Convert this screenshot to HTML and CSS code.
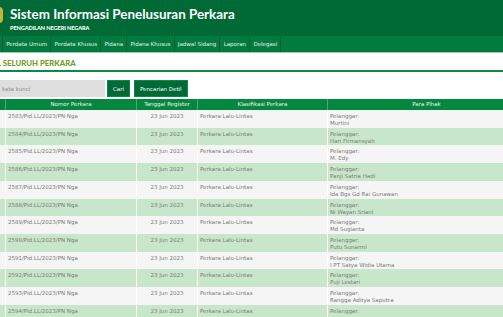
FILE: index.html
```html
<!DOCTYPE html>
<html lang="id">
<head>
<meta charset="utf-8">
<title>Sistem Informasi Penelusuran Perkara</title>
<link rel="stylesheet" href="styles.css">
</head>
<body>
<header class="top">
  <div class="logo"></div>
  <div class="brand">
    <h1 class="brand-title">Sistem Informasi Penelusuran Perkara</h1>
    <div class="brand-sub">PENGADILAN NEGERI NEGARA</div>
  </div>
</header>
<nav class="menu">
  <span class="menu-home" aria-label="Beranda"></span>
  <a class="menu-item">Perdata Umum</a>
  <a class="menu-item">Perdata Khusus</a>
  <a class="menu-item">Pidana</a>
  <a class="menu-item">Pidana Khusus</a>
  <a class="menu-item">Jadwal Sidang</a>
  <a class="menu-item">Laporan</a>
  <a class="menu-item">Delegasi</a>
</nav>
<section class="content">
  <h2 class="page-title">L SELURUH PERKARA</h2>
  <form class="search">
    <input class="search-input" type="text" placeholder="kata kunci">
    <button class="btn" type="button">Cari</button>
    <button class="btn" type="button">Pencarian Detil</button>
  </form>
  <table class="cases">
    <thead>
      <tr><th class="c-no"></th><th class="c-nomor">Nomor Perkara</th><th class="c-tgl">Tanggal Register</th><th class="c-klas">Klasifikasi Perkara</th><th class="c-pihak">Para Pihak</th></tr>
    </thead>
    <tbody>
      <tr><td></td><td>2583/Pid.LL/2023/PN Nga</td><td class="center">23 Jun 2023</td><td>Perkara Lalu-Lintas</td><td>Pelanggar:<br>Murtini</td></tr>
      <tr><td></td><td>2584/Pid.LL/2023/PN Nga</td><td class="center">23 Jun 2023</td><td>Perkara Lalu-Lintas</td><td>Pelanggar:<br>Hari Firmansyah</td></tr>
      <tr><td></td><td>2585/Pid.LL/2023/PN Nga</td><td class="center">23 Jun 2023</td><td>Perkara Lalu-Lintas</td><td>Pelanggar:<br>M. Edy</td></tr>
      <tr><td></td><td>2586/Pid.LL/2023/PN Nga</td><td class="center">23 Jun 2023</td><td>Perkara Lalu-Lintas</td><td>Pelanggar:<br>Panji Satria Hadi</td></tr>
      <tr><td></td><td>2587/Pid.LL/2023/PN Nga</td><td class="center">23 Jun 2023</td><td>Perkara Lalu-Lintas</td><td>Pelanggar:<br>Ida Bgs Gd Rai Gunawan</td></tr>
      <tr><td></td><td>2588/Pid.LL/2023/PN Nga</td><td class="center">23 Jun 2023</td><td>Perkara Lalu-Lintas</td><td>Pelanggar:<br>Ni Wayan Sriani</td></tr>
      <tr><td></td><td>2589/Pid.LL/2023/PN Nga</td><td class="center">23 Jun 2023</td><td>Perkara Lalu-Lintas</td><td>Pelanggar:<br>Md Sugianta</td></tr>
      <tr><td></td><td>2590/Pid.LL/2023/PN Nga</td><td class="center">23 Jun 2023</td><td>Perkara Lalu-Lintas</td><td>Pelanggar:<br>Putu Sunarmi</td></tr>
      <tr><td></td><td>2591/Pid.LL/2023/PN Nga</td><td class="center">23 Jun 2023</td><td>Perkara Lalu-Lintas</td><td>Pelanggar:<br>I PT Satya Widia Utama</td></tr>
      <tr><td></td><td>2592/Pid.LL/2023/PN Nga</td><td class="center">23 Jun 2023</td><td>Perkara Lalu-Lintas</td><td>Pelanggar:<br>Puji Lestari</td></tr>
      <tr><td></td><td>2593/Pid.LL/2023/PN Nga</td><td class="center">23 Jun 2023</td><td>Perkara Lalu-Lintas</td><td>Pelanggar:<br>Rangga Aditya Saputra</td></tr>
      <tr><td></td><td>2594/Pid.LL/2023/PN Nga</td><td class="center">23 Jun 2023</td><td>Perkara Lalu-Lintas</td><td>Pelanggar:</td></tr>
    </tbody>
  </table>
</section>
</body>
</html>
```
FILE: styles.css
```css
html, body {
  margin: 0;
  padding: 0;
  overflow: hidden;
  background: #fff;
}
body {
  font-family: "DejaVu Sans", sans-serif;
  width: 503px;
  height: 317px;
}
.top {
  height: 36px;
  background: #006a36;
  display: flex;
  align-items: flex-start;
}
.logo {
  width: 24px;
  height: 16px;
  margin-left: -21px;
  margin-top: 7px;
  border-radius: 4px;
  background: #c8b23a;
  flex: none;
}
.brand {
  margin-left: 7px;
  color: #fff;
}
.brand-title {
  margin: 5px 0 0;
  font-family: Lato, "DejaVu Sans", sans-serif;
  font-size: 13.4px;
  font-weight: bold;
  line-height: 18px;
}
.brand-sub {
  margin-top: 1px;
  font-family: Lato, "DejaVu Sans", sans-serif;
  font-size: 5.6px;
  font-weight: 900;
  letter-spacing: -0.1px;
  line-height: 8px;
}
.menu {
  height: 16px;
  background: #037b40;
  border-bottom: 1px solid #9cc7ad;
  display: flex;
  align-items: stretch;
}
.menu-item {
  color: #e4f2e8;
  font-size: 5.5px;
  line-height: 16px;
  padding: 0 3.2px;
  border-right: 1px solid #01602f;
  white-space: nowrap;
}
.menu-home {
  width: 2px;
  border-right: 1px solid #01602f;
}
.content {
  padding-top: 5px;
}
.page-title {
  margin: 0 0 0 -3px;
  font-family: Lato, "DejaVu Sans", sans-serif;
  font-size: 7.8px;
  font-weight: 900;
  color: #7a9b2a;
  line-height: 10px;
  padding-bottom: 2px;
  border-bottom: 2px solid #0a8a45;
}
.search {
  display: flex;
  gap: 2px;
  margin-top: 8px;
  height: 17px;
}
.search-input {
  width: 105px;
  height: 17px;
  box-sizing: border-box;
  border: 0;
  background: #dedede;
  font-family: inherit;
  font-size: 5.5px;
  padding: 0 2px;
  margin: 0;
}
.search-input::placeholder {
  color: #8a8a8a;
}
.btn {
  height: 17px;
  margin: 0;
  border: 1px solid #0d8a48;
  background: #006a36;
  color: #fff;
  font-family: inherit;
  font-size: 5.5px;
  padding: 0 5px;
}
.btn + .btn {
  margin-left: 2px;
}
.cases {
  margin-top: 2px;
  margin-left: -20px;
  border-collapse: collapse;
  table-layout: fixed;
  width: 546px;
  font-size: 5.5px;
  color: #7a7a7a;
}
.cases th {
  background: #06873f;
  color: #eaf6ee;
  font-weight: normal;
  height: 11px;
  padding: 0;
  border-right: 1px solid #4aa877;
  line-height: 11px;
}
.c-no { width: 25px; }
.c-nomor { width: 130px; }
.c-tgl { width: 60px; }
.c-klas { width: 129px; }
.cases td {
  height: 17.73px;
  box-sizing: border-box;
  padding: 3px 2px 0;
  vertical-align: top;
  line-height: 7px;
  border-right: 1px solid #ffffff;
  white-space: nowrap;
  overflow: hidden;
}
.cases tbody tr:nth-child(odd) td { background: #f5f5f5; }
.cases tbody tr:nth-child(even) td { background: #c8e6c9; }
.center { text-align: center; }
```
